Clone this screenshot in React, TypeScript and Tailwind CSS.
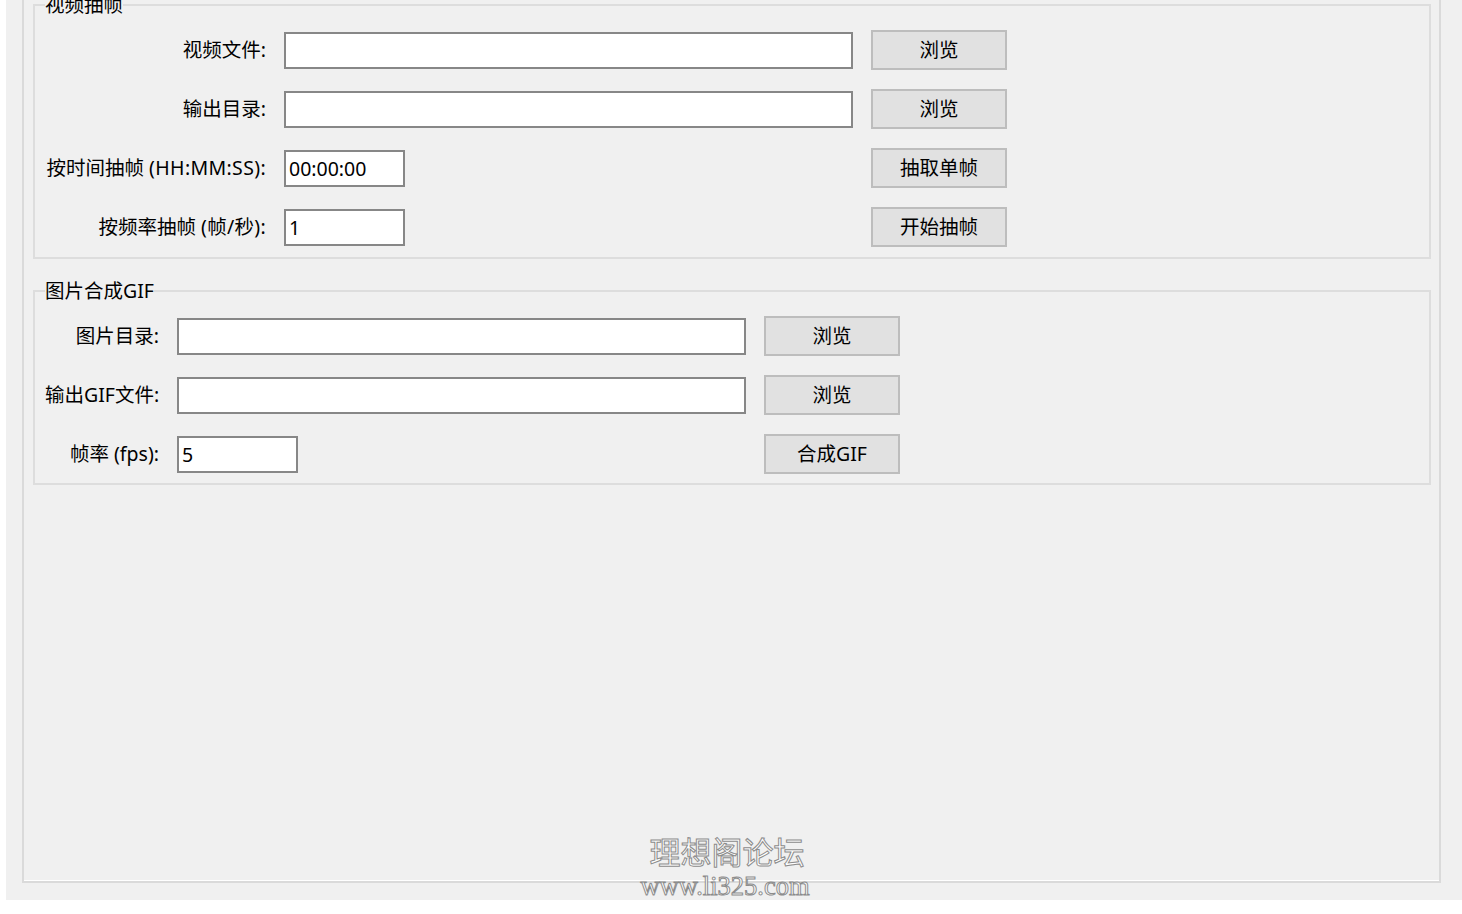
import React from "react";

const FONT = "font-['Noto_Sans','Noto_Sans_CJK_SC',sans-serif]";

type RowProps = { label: React.ReactNode; value?: string; short?: boolean; button: string };

function Row({ label, value = "", short = false, button }: RowProps) {
  return (
    <>
      <div className="text-right whitespace-nowrap leading-[24px]">{label}</div>
      <div className="flex items-center">
        <input
          readOnly
          value={value}
          className={`${short ? "w-[121px]" : "w-[569px]"} h-[37px] bg-white border-2 border-[#878787] pl-[3px] text-[19.5px] text-black outline-none ${FONT}`}
        />
      </div>
      <button className={`w-[136px] h-[40px] bg-[#e1e1e1] border-2 border-[#bdbdbd] text-[19.5px] text-black ${FONT}`}>
        {button}
      </button>
    </>
  );
}

function Group({ title, children, className = "" }: { title: string; children: React.ReactNode; className?: string }) {
  return (
    <fieldset className={`border-2 border-[#dddddd] pl-[10px] pr-[10px] pt-[13px] m-0 min-w-0 ${className}`}>
      <legend className="px-0 leading-[24px]">{title}</legend>
      {children}
    </fieldset>
  );
}

export default function App() {
  return (
    <div className={`w-[1462px] h-[914px] bg-white text-[19.5px] text-black ${FONT}`}>
      <div className="relative ml-[6px] h-[900px] bg-[#f0f0f0] flex flex-col overflow-hidden">
        <div className="ml-[16px] mr-[21px] h-[883px] border-x-2 border-b-2 border-[#dadada] shadow-[inset_0_-1px_0_#ffffff] flex flex-col pl-[9px] pr-[8px]">
          <Group title="视频抽帧" className="-mt-[7px] pb-[10px]">
            <div className="grid grid-cols-[221px_569px_136px] gap-x-[18px] gap-y-[19px] items-center justify-start">
              <Row label="视频文件:" button="浏览" />
              <Row label="输出目录:" button="浏览" />
              <Row
                label={
                  <>
                    按时间抽帧 <span className="tracking-[0.35px]">(HH:MM:SS):</span>
                  </>
                }
                value="00:00:00"
                short
                button="抽取单帧"
              />
              <Row
                label={
                  <>
                    按频率抽帧 <span className="tracking-[0.3px]">(帧/秒):</span>
                  </>
                }
                value="1"
                short
                button="开始抽帧"
              />
            </div>
          </Group>
          <Group title="图片合成GIF" className="mt-[20px] pb-[9px]">
            <div className="grid grid-cols-[114px_569px_136px] gap-x-[18px] gap-y-[19px] items-center justify-start">
              <Row label="图片目录:" button="浏览" />
              <Row label="输出GIF文件:" button="浏览" />
              <Row label="帧率 (fps):" value="5" short button="合成GIF" />
            </div>
          </Group>
        </div>
        <div className="absolute left-0 right-[14px] top-[832px] flex flex-col items-center pointer-events-none">
          <div className="text-[31px] leading-[38px] text-white [-webkit-text-stroke:1px_#8c8c8c] font-['Noto_Sans_CJK_SC',sans-serif]">
            理想阁论坛
          </div>
          <div className="mr-[4px] mt-[1px] text-[26.5px] leading-[30px] text-white [-webkit-text-stroke:1px_#8c8c8c] font-['Liberation_Serif',serif]">
            www.li325.com
          </div>
        </div>
      </div>
    </div>
  );
}
